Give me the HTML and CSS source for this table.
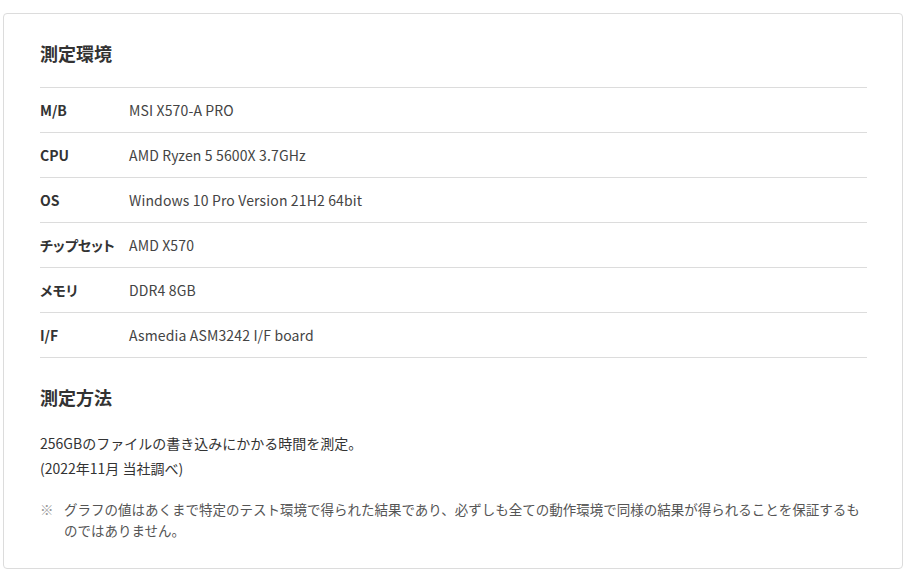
FILE: index.html
```html
<!DOCTYPE html>
<html lang="ja">
<head>
<meta charset="utf-8">
<link rel="stylesheet" href="styles.css">
</head>
<body>
<section class="card">
  <h2 class="heading">測定環境</h2>
  <dl class="spec">
    <div class="row"><dt>M/B</dt><dd>MSI X570-A PRO</dd></div>
    <div class="row"><dt>CPU</dt><dd>AMD Ryzen 5 5600X 3.7GHz</dd></div>
    <div class="row"><dt>OS</dt><dd>Windows 10 Pro Version 21H2 64bit</dd></div>
    <div class="row"><dt>チップセット</dt><dd>AMD X570</dd></div>
    <div class="row"><dt>メモリ</dt><dd>DDR4 8GB</dd></div>
    <div class="row"><dt>I/F</dt><dd>Asmedia ASM3242 I/F board</dd></div>
  </dl>
  <h2 class="heading heading-second">測定方法</h2>
  <p class="method">256GBのファイルの書き込みにかかる時間を測定。<br>(2022年11月 当社調べ)</p>
  <p class="note"><span class="mark">※</span><span class="note-text">グラフの値はあくまで特定のテスト環境で得られた結果であり、必ずしも全ての動作環境で同様の結果が得られることを保証するものではありません。</span></p>
</section>
</body>
</html>
```
FILE: styles.css
```css
* { box-sizing: border-box; }
html, body { margin: 0; padding: 0; background: #fff; }
body {
  padding: 13px 5px 10px 3px;
  font-family: "Noto Sans CJK JP", "Noto Sans", sans-serif;
  color: #333;
  font-size: 14px;
}
.card {
  width: 900px;
  border: 1px solid #dcdcdc;
  border-radius: 4px;
  padding: 26px 35px 27px 36px;
}
.heading {
  margin: 0 0 20px;
  font-size: 18px;
  line-height: 27px;
  font-weight: 700;
  color: #333;
}
.heading-second { margin-top: 26px; margin-bottom: 20px; }
.spec {
  margin: 0;
  border-top: 1px solid #dcdcdc;
}
.row {
  display: flex;
  align-items: center;
  height: 45px;
  padding-bottom: 1px;
  border-bottom: 1px solid #dcdcdc;
}
.row dt {
  width: 89px;
  flex: none;
  font-weight: 700;
  color: #333;
  font-feature-settings: "palt";
}
.row dd {
  margin: 0;
  color: #444;
  letter-spacing: 0.01em;
}
.method {
  margin: 0 0 18px;
  line-height: 25px;
  color: #333;
}
.note {
  margin: 0;
  display: flex;
  line-height: 21px;
  color: #555;
  font-size: 13.5px;
}
.mark {
  width: 24px;
  flex: none;
  color: #999;
}
.note-text { flex: 1; }
```
